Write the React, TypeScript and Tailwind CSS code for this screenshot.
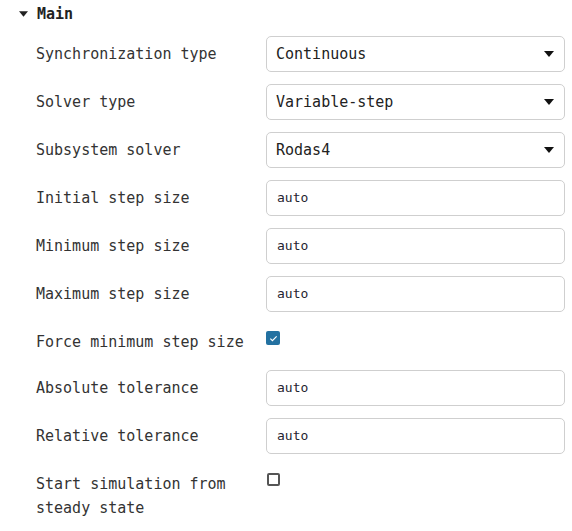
const rows: { label: string; kind: "select" | "input" | "check"; value?: string; checked?: boolean }[] = [
  { label: "Synchronization type", kind: "select", value: "Continuous" },
  { label: "Solver type", kind: "select", value: "Variable-step" },
  { label: "Subsystem solver", kind: "select", value: "Rodas4" },
  { label: "Initial step size", kind: "input", value: "auto" },
  { label: "Minimum step size", kind: "input", value: "auto" },
  { label: "Maximum step size", kind: "input", value: "auto" },
  { label: "Force minimum step size", kind: "check", checked: true },
  { label: "Absolute tolerance", kind: "input", value: "auto" },
  { label: "Relative tolerance", kind: "input", value: "auto" },
  { label: "Start simulation from steady state", kind: "check", checked: false },
];

function Caret({ className }: { className?: string }) {
  return (
    <svg viewBox="0 0 10 6" className={className}>
      <path d="M0 0h10L5 6z" fill="currentColor" />
    </svg>
  );
}

function Control({ row }: { row: (typeof rows)[number] }) {
  if (row.kind === "select") {
    return (
      <div className="flex h-[36px] items-center justify-between rounded-[5px] border border-[#cfcfcf] bg-white pl-[9px] pr-[10px] text-[15px] text-[#222]">
        <span>{row.value}</span>
        <Caret className="h-[6px] w-[10px] text-[#111]" />
      </div>
    );
  }
  if (row.kind === "input") {
    return (
      <div className="flex h-[36px] items-center rounded-[5px] border border-[#cfcfcf] bg-white pl-[10px] text-[13px] text-[#1f2430]">
        {row.value}
      </div>
    );
  }
  return (
    <div className="min-h-[34px] pt-[7px]">
      {row.checked ? (
        <div className="flex h-[14px] w-[14px] items-center justify-center rounded-[2px] bg-[#2371a1]">
          <svg viewBox="0 0 10 10" className="h-[9px] w-[9px]">
            <path d="M1.5 5.2l2.3 2.2L8.5 2.6" fill="none" stroke="white" strokeWidth="1.3" />
          </svg>
        </div>
      ) : (
        <div className="ml-px h-[13px] w-[13px] rounded-[2px] border-2 border-[#555]" />
      )}
    </div>
  );
}

export default function App() {
  return (
    <div className="min-h-[531px] w-[572px] bg-white font-['DejaVu_Sans_Mono',monospace] text-[#333]">
      <div className="flex items-center gap-[9px] pl-[19px] pt-[2px] text-[15px] font-bold leading-6 text-[#222]">
        <Caret className="h-[6px] w-[9px]" />
        <span>Main</span>
      </div>
      <div className="mt-[10px] grid grid-cols-[230px_1fr] gap-y-[12px] pl-[36px] pr-[7px]">
        {rows.map((row) => (
          <div key={row.label} className="contents">
            <div className="pr-4 pt-[6px] text-[15px] leading-6">{row.label}</div>
            <Control row={row} />
          </div>
        ))}
      </div>
    </div>
  );
}
